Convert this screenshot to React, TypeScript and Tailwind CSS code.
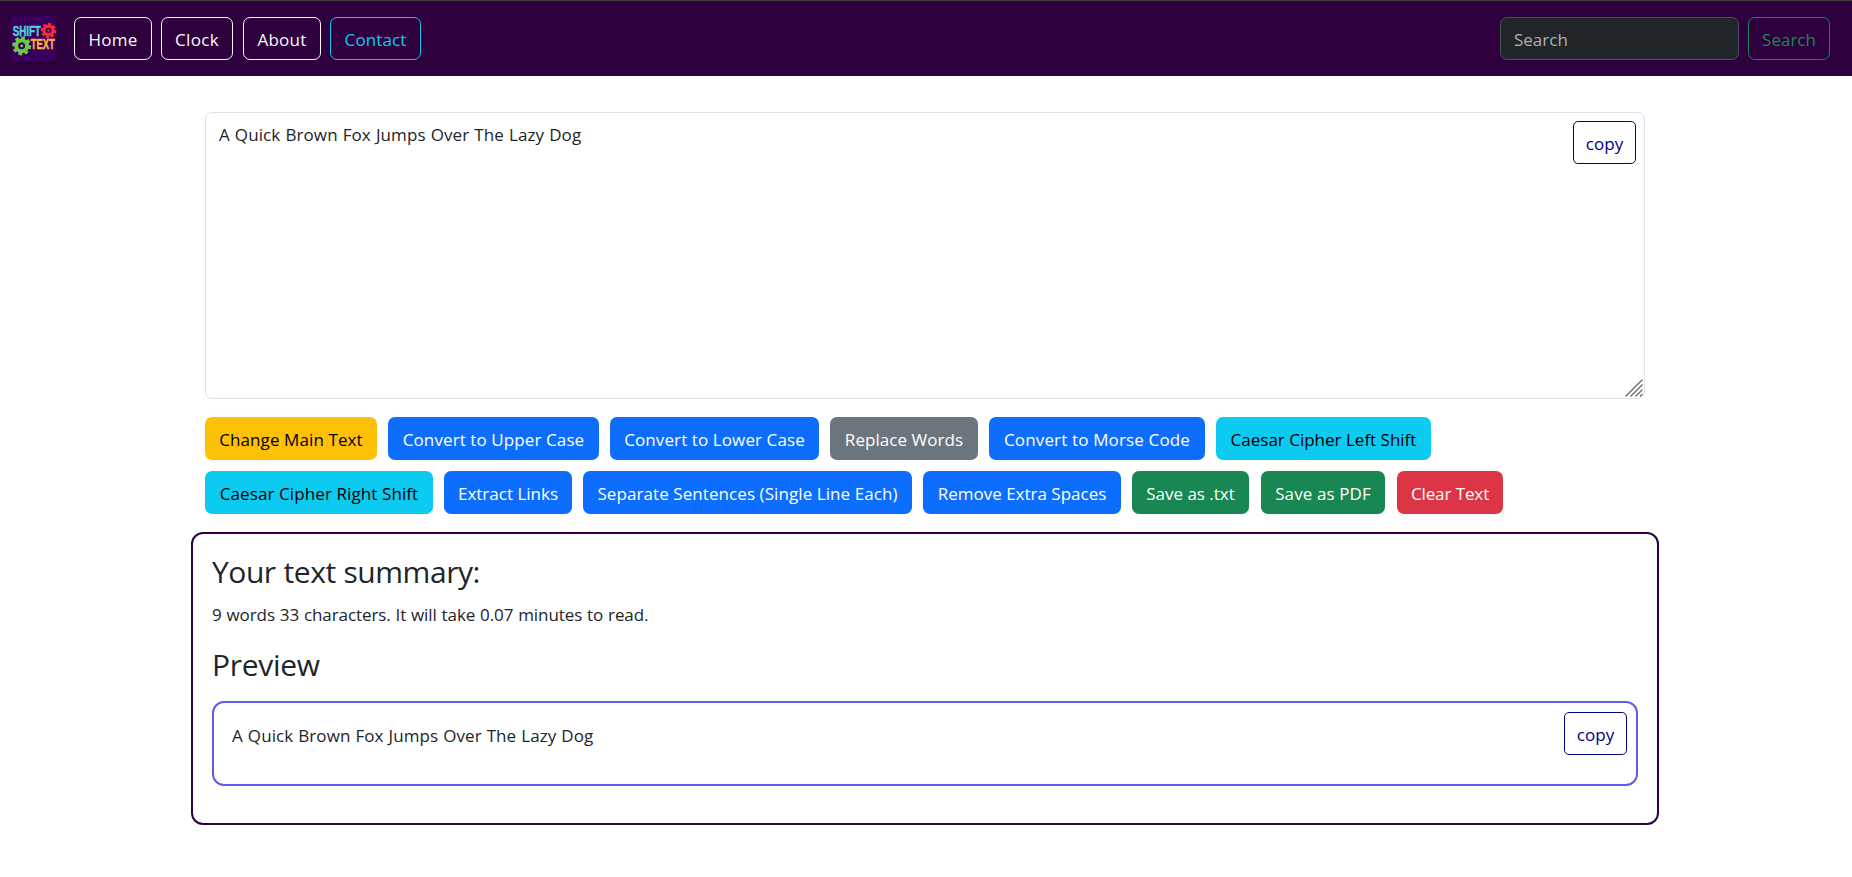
import React from "react";

const OUTLINE = "flex h-[43px] items-center justify-center rounded-[7px] border pt-px";

const NAV = [
  { label: "Home", cls: "w-[78px] border-[#f8f9fa] text-[#f8f9fa] tracking-[0.2px]" },
  { label: "Clock", cls: "ml-[9px] w-[72px] border-[#f8f9fa] text-[#f8f9fa] tracking-[0.3px]" },
  { label: "About", cls: "ml-[10px] w-[78px] border-[#f8f9fa] text-[#f8f9fa] tracking-[0.2px]" },
  { label: "Contact", cls: "ml-[9px] w-[91px] border-[#0dcaf0] text-[#0dcaf0] tracking-[0.1px]" },
];

const ROWS = [
  [
    { label: "Change Main Text", cls: "w-[172px] bg-[#ffc107] text-black tracking-[0.1px]" },
    { label: "Convert to Upper Case", cls: "w-[211px] bg-[#0d6efd] text-white tracking-[0.1px]" },
    { label: "Convert to Lower Case", cls: "w-[209px] bg-[#0d6efd] text-white tracking-[0.1px]" },
    { label: "Replace Words", cls: "w-[148px] bg-[#6c757d] text-white tracking-[0.05px]" },
    { label: "Convert to Morse Code", cls: "w-[216px] bg-[#0d6efd] text-white tracking-[0.15px]" },
    { label: "Caesar Cipher Left Shift", cls: "w-[215px] bg-[#0dcaf0] text-black" },
  ],
  [
    { label: "Caesar Cipher Right Shift", cls: "w-[228px] bg-[#0dcaf0] text-black tracking-[0.1px]" },
    { label: "Extract Links", cls: "w-[128px] bg-[#0d6efd] text-white" },
    { label: "Separate Sentences (Single Line Each)", cls: "w-[329px] bg-[#0d6efd] text-white tracking-[0.08px]" },
    { label: "Remove Extra Spaces", cls: "w-[198px] bg-[#0d6efd] text-white" },
    { label: "Save as .txt", cls: "w-[117px] bg-[#198754] text-white" },
    { label: "Save as PDF", cls: "ml-px w-[124px] bg-[#198754] text-white tracking-[0.1px]" },
    { label: "Clear Text", cls: "ml-px w-[106px] bg-[#dc3545] text-white tracking-[-0.1px]" },
  ],
];

function Gear({ cx, cy, r, color }: { cx: number; cy: number; r: number; color: string }) {
  return (
    <g transform={`translate(${cx} ${cy})`}>
      {[0, 45, 90, 135, 180, 225, 270, 315].map((a) => (
        <rect key={a} x={-r * 0.2} y={-r} width={r * 0.4} height={r * 0.45} fill={color} transform={`rotate(${a + 10})`} />
      ))}
      <circle r={r * 0.57} fill="none" stroke={color} strokeWidth={r * 0.42} />
      <circle r={r * 0.36} fill="#3a0058" />
      <circle r={r * 0.16} fill={color} />
    </g>
  );
}

function Logo() {
  return (
    <svg width="45" height="45" viewBox="0 0 45 45" className="block overflow-visible">
      <rect width="45" height="45" fill="#38005a" />
      <Gear cx={37.5} cy={14.6} r={7.7} color="#fb2a33" />
      <Gear cx={10.7} cy={29.8} r={9.4} color="#6cc84a" />
      <g fontFamily="'Liberation Sans Narrow', 'Liberation Sans', sans-serif" fontWeight="700" fontSize="14" strokeWidth="0.5">
        <text x="1.8" y="19.9" textLength="28" lengthAdjust="spacingAndGlyphs" fill="#4fd0e0" stroke="#4fd0e0">SHIFT</text>
        <text x="19.8" y="32.9" textLength="24" lengthAdjust="spacingAndGlyphs" fill="#fbb040" stroke="#fbb040">TEXT</text>
      </g>
    </svg>
  );
}

function CopyButton() {
  return (
    <button className="flex h-[43px] w-[63px] items-center justify-center rounded-[5px] border border-[#000080] bg-white pt-px text-[#000080] tracking-[0.1px]">
      copy
    </button>
  );
}

export default function App() {
  return (
    <div className="h-[877px] overflow-hidden bg-white font-['Open_Sans',sans-serif] text-[17px] leading-[27px] tracking-normal text-[#212529] [word-spacing:0.5px]">
      <nav className="flex h-[76px] items-start justify-between border-t border-[#3c4043] bg-[#2e003e] pr-[22px] pl-[11px]">
        <div className="flex pt-[15px]">
          <Logo />
          <div className="ml-[18px] flex pt-px">
            {NAV.map((n) => (
              <a key={n.label} className={`${OUTLINE} ${n.cls}`}>{n.label}</a>
            ))}
          </div>
        </div>
        <form className="flex gap-[9px] pt-4">
          <input
            placeholder="Search"
            className="h-[43px] w-[239px] rounded-[7px] border border-[#495057] bg-[#212529] px-[13px] pt-px placeholder:text-[#adb0b3]"
          />
          <button type="button" className={`${OUTLINE} w-[82px] border-[#198754] text-[#198754]`}>Search</button>
        </form>
      </nav>

      <main className="pt-9">
        <section className="relative ml-[205px] h-[287px] w-[1440px] rounded-[7px] border border-[#dee2e6] px-[13px] pt-2">
          <p className="tracking-[0.1px]">A Quick Brown Fox Jumps Over The Lazy Dog</p>
          <div className="absolute top-2 right-2">
            <CopyButton />
          </div>
          <svg width="18" height="18" viewBox="0 0 18 18" className="absolute right-px bottom-px" fill="none" stroke="#6b6b6b" strokeWidth="1.4">
            <path d="M0.5 17.5L17.5 0.5M5.5 17.5L17.5 5.5M10.5 17.5L17.5 10.5M15 17.5L17.5 15" />
          </svg>
        </section>

        <div className="mt-[18px] ml-[205px] flex flex-col gap-[11px]">
          {ROWS.map((row, i) => (
            <div key={i} className="flex gap-[11px]">
              {row.map((b) => (
                <button key={b.label} className={`flex h-[43px] items-center justify-center rounded-[7px] pt-px whitespace-nowrap ${b.cls}`}>
                  {b.label}
                </button>
              ))}
            </div>
          ))}
        </div>

        <section className="mt-[18px] ml-[191px] h-[293px] w-[1468px] rounded-[12px] border-2 border-[#2e003e] px-[19px] pt-[19px]">
          <h2 className="text-[30px] leading-[38px] tracking-[-0.45px]">Your text summary:</h2>
          <p className="mt-[10px] tracking-[-0.08px]">9 words 33 characters. It will take 0.07 minutes to read.</p>
          <h2 className="mt-[18px] text-[30px] leading-[38px] tracking-[-0.3px]">Preview</h2>
          <div className="relative mt-[17px] h-[85px] w-[1426px] rounded-[12px] border-2 border-[#605ce6] px-[18px] pt-[19px]">
            <p className="tracking-[0.08px]">A Quick Brown Fox Jumps Over The Lazy Dog</p>
            <div className="absolute top-[9px] right-[9px]">
              <CopyButton />
            </div>
          </div>
        </section>
      </main>
    </div>
  );
}
